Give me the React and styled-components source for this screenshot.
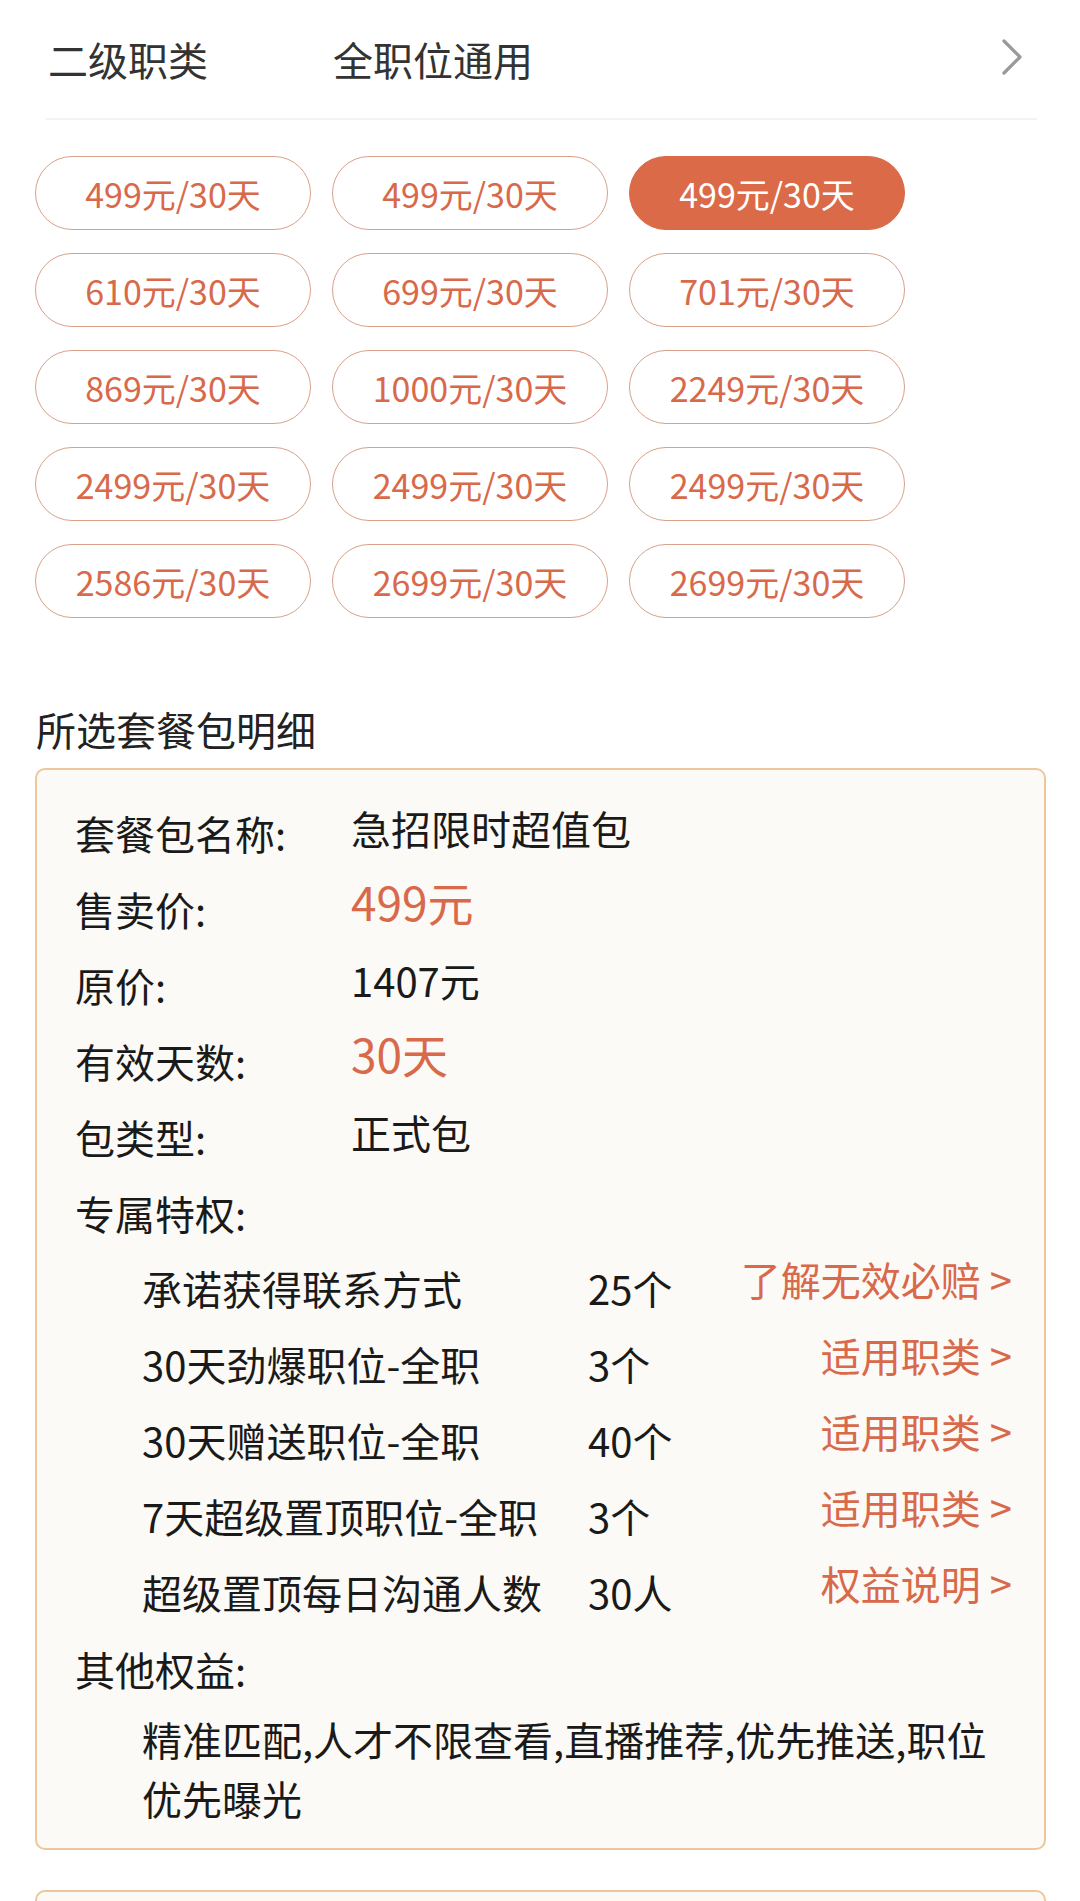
import React from 'react';
import styled, { createGlobalStyle } from 'styled-components';

const GlobalStyle = createGlobalStyle`
  html, body { margin: 0; padding: 0; background: #ffffff; }
  body {
    font-family: "Noto Sans CJK SC", "Noto Sans", sans-serif;
    color: #1a1a1a;
  }
  * { box-sizing: border-box; }
`;

const ORANGE = '#d8694a';

const Page = styled.div`
  width: 1080px;
  padding-bottom: 40px;
`;

const Header = styled.div`
  display: flex;
  align-items: center;
  height: 120px;
  margin: 0 43px 0 46px;
  padding-left: 2px;
  border-bottom: 2px solid #f3f3f3;
`;

const HeaderLabel = styled.span`
  width: 285px;
  flex-shrink: 0;
  font-size: 40px;
  color: #333;
`;

const HeaderValue = styled.span`
  flex: 1;
  font-size: 40px;
  color: #333;
`;

const ChevronIcon = styled.svg`
  width: 24px;
  height: 36px;
  margin-right: 13px;
  margin-top: -4px;
`;

const PillGrid = styled.div`
  display: grid;
  grid-template-columns: repeat(3, 276px);
  column-gap: 21px;
  row-gap: 23px;
  margin: 36px 0 0 35px;
`;

const Pill = styled.div`
  height: 74px;
  border-radius: 37px;
  border: 1.5px solid ${p => (p.$active ? '#db6a48' : '#d9a08a')};
  background: ${p => (p.$active ? '#db6a48' : '#ffffff')};
  color: ${p => (p.$active ? '#ffffff' : ORANGE)};
  font-size: 34px;
  display: flex;
  align-items: center;
  justify-content: center;
`;

const SectionTitle = styled.div`
  margin: 83px 0 0 36px;
  font-size: 40px;
  line-height: 56px;
  color: #222;
`;

const Card = styled.div`
  margin: 11px 34px 0 35px;
  border: 2px solid #edc69c;
  border-radius: 10px;
  background: #fcfaf6;
  padding: 25px 32px 20px 38px;
  min-height: ${p => (p.$min ? p.$min : 0)}px;
`;

const NextCard = styled(Card)`
  margin-top: 40px;
`;

const InfoRow = styled.div`
  display: flex;
  align-items: flex-start;
  height: 76px;
`;

const InfoLabel = styled.div`
  width: 276px;
  flex-shrink: 0;
  font-size: 40px;
  line-height: 76px;
  color: #1a1a1a;
`;

const InfoValue = styled.div`
  font-size: ${p => (p.$accent ? 46 : 40)}px;
  line-height: ${p => (p.$accent ? 60 : 66)}px;
  color: ${p => (p.$accent ? ORANGE : '#1a1a1a')};
`;

const PrivilegeRow = styled.div`
  display: flex;
  align-items: flex-start;
  height: 76px;
  padding-left: 67px;
`;

const PrivName = styled.div`
  width: 446px;
  flex-shrink: 0;
  font-size: 40px;
  line-height: 74px;
  white-space: nowrap;
`;

const PrivCount = styled.div`
  flex: 1;
  font-size: 40px;
  line-height: 74px;
`;

const PrivLink = styled.div`
  font-size: 40px;
  line-height: 56px;
  color: ${ORANGE};
  white-space: nowrap;
`;

const OtherText = styled.div`
  padding-left: 67px;
  margin-top: 3px;
  font-size: 40px;
  line-height: 59px;
  color: #1a1a1a;
`;

const prices = [
  '499元/30天', '499元/30天', '499元/30天',
  '610元/30天', '699元/30天', '701元/30天',
  '869元/30天', '1000元/30天', '2249元/30天',
  '2499元/30天', '2499元/30天', '2499元/30天',
  '2586元/30天', '2699元/30天', '2699元/30天',
];

const info = [
  { label: '套餐包名称:', value: '急招限时超值包' },
  { label: '售卖价:', value: '499元', accent: true },
  { label: '原价:', value: '1407元' },
  { label: '有效天数:', value: '30天', accent: true },
  { label: '包类型:', value: '正式包' },
];

const privileges = [
  { name: '承诺获得联系方式', count: '25个', link: '了解无效必赔' },
  { name: '30天劲爆职位-全职', count: '3个', link: '适用职类' },
  { name: '30天赠送职位-全职', count: '40个', link: '适用职类' },
  { name: '7天超级置顶职位-全职', count: '3个', link: '适用职类' },
  { name: '超级置顶每日沟通人数', count: '30人', link: '权益说明' },
];

export default function App() {
  return (
    <Page>
      <GlobalStyle />
      <Header>
        <HeaderLabel>二级职类</HeaderLabel>
        <HeaderValue>全职位通用</HeaderValue>
        <ChevronIcon viewBox="0 0 24 36" fill="none">
          <path d="M4 2 L20 18 L4 34" stroke="#999999" strokeWidth="3.2" strokeLinecap="round" strokeLinejoin="round" />
        </ChevronIcon>
      </Header>

      <PillGrid>
        {prices.map((p, i) => (
          <Pill key={i} $active={i === 2}>{p}</Pill>
        ))}
      </PillGrid>

      <SectionTitle>所选套餐包明细</SectionTitle>

      <Card>
        {info.map(r => (
          <InfoRow key={r.label}>
            <InfoLabel>{r.label}</InfoLabel>
            <InfoValue $accent={r.accent}>{r.value}</InfoValue>
          </InfoRow>
        ))}
        <InfoRow>
          <InfoLabel>专属特权:</InfoLabel>
        </InfoRow>
        {privileges.map(p => (
          <PrivilegeRow key={p.name}>
            <PrivName>{p.name}</PrivName>
            <PrivCount>{p.count}</PrivCount>
            <PrivLink>{p.link} &gt;</PrivLink>
          </PrivilegeRow>
        ))}
        <InfoRow>
          <InfoLabel>其他权益:</InfoLabel>
        </InfoRow>
        <OtherText>精准匹配,人才不限查看,直播推荐,优先推送,职位优先曝光</OtherText>
      </Card>

      <NextCard $min={200} />
    </Page>
  );
}
